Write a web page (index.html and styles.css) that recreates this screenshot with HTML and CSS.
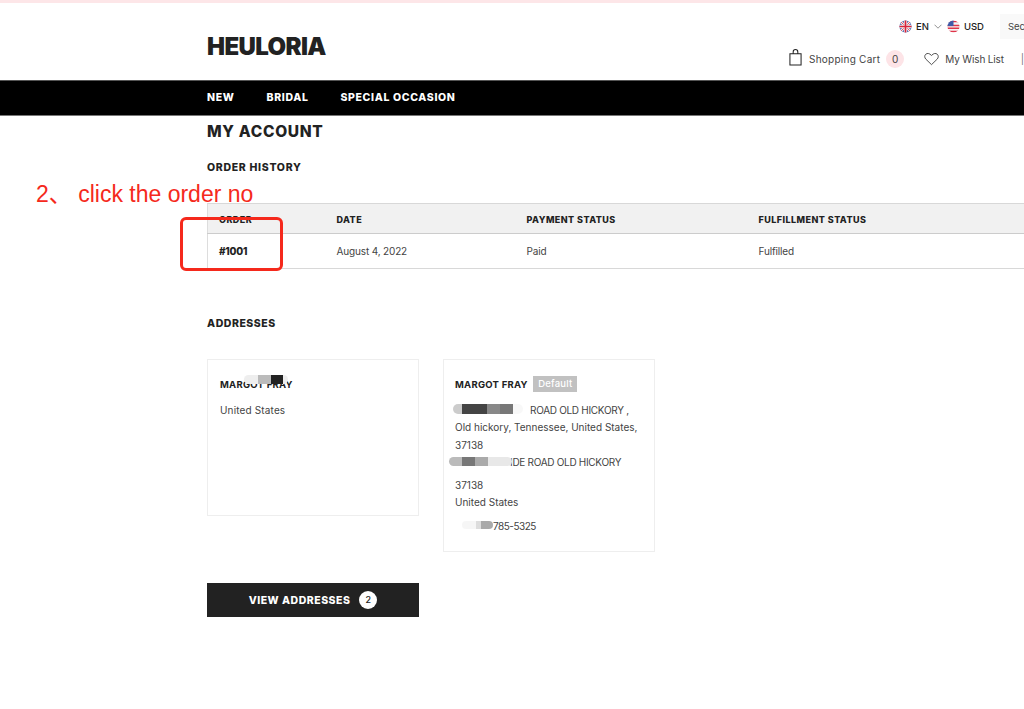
FILE: index.html
```html
<!DOCTYPE html>
<html lang="en">
<head>
<meta charset="utf-8">
<title>My Account</title>
<link rel="stylesheet" href="styles.css">
</head>
<body>
<div class="topstrip"></div>
<header class="header">
  <div class="logo">HEULORIA</div>
  <div class="tools">
    <div class="tools-top">
      <span class="pick">
        <svg class="flag" viewBox="0 0 14 14"><defs><clipPath id="c1"><circle cx="7" cy="7" r="6.5"/></clipPath></defs><g clip-path="url(#c1)"><rect width="14" height="14" fill="#3f5aa8"/><path d="M0 0L14 14M14 0L0 14" stroke="#eee" stroke-width="2.6"/><path d="M0 0L14 14M14 0L0 14" stroke="#d8324a" stroke-width=".9"/><path d="M7 0V14M0 7H14" stroke="#eee" stroke-width="3.6"/><path d="M7 0V14M0 7H14" stroke="#d8243c" stroke-width="1.8"/></g></svg>
        <span>EN</span>
        <svg class="chev" viewBox="0 0 8 5"><path d="M.5.7L4 4.2 7.5.7" fill="none" stroke="#777" stroke-width=".8"/></svg>
      </span>
      <span class="pick usd">
        <svg class="flag" viewBox="0 0 14 14"><defs><clipPath id="c2"><circle cx="7" cy="7" r="6.5"/></clipPath></defs><g clip-path="url(#c2)"><rect width="14" height="14" fill="#f4f4f4"/><path d="M0 1.5H14M0 6H14M0 9H14M0 12.5H14" stroke="#e0344a" stroke-width="1.6"/><rect width="7" height="6.5" fill="#3f5aa8"/></g></svg>
        <span>USD</span>
      </span>
      <span class="search">Sec</span>
    </div>
    <div class="tools-bottom">
      <span class="tool">
        <svg class="bag" viewBox="0 0 14 18"><path d="M1 5H13V17H1ZM4.5 5V3A2.5 2.5 0 0 1 9.5 3V5" fill="none" stroke="#222" stroke-width="1.1"/></svg>
        <span class="cart-label">Shopping Cart</span>
        <span class="count">0</span>
      </span>
      <span class="tool wish">
        <svg class="heart" viewBox="0 0 16 14"><path d="M8 13L2 7.2C.4 5.6.4 3.2 1.9 1.9 3.4.6 5.6.7 8 3.2 10.4.7 12.6.6 14.1 1.9 15.6 3.2 15.6 5.6 14 7.2Z" fill="none" stroke="#333" stroke-width=".9"/></svg>
        <span class="wish-label">My Wish List</span>
      </span>
      <span class="tool cut">|</span>
    </div>
  </div>
</header>
<nav class="nav">
  <a>NEW</a>
  <a>BRIDAL</a>
  <a>SPECIAL OCCASION</a>
</nav>
<main class="main">
  <h1 class="page-title">MY ACCOUNT</h1>
  <h2 class="section-title">ORDER HISTORY</h2>
  <table class="orders">
    <thead>
      <tr><th class="c1">ORDER</th><th class="c2">DATE</th><th class="c3">PAYMENT STATUS</th><th class="c4">FULFILLMENT STATUS</th></tr>
    </thead>
    <tbody>
      <tr><td class="order-no">#1001</td><td>August 4, 2022</td><td>Paid</td><td>Fulfilled</td></tr>
    </tbody>
  </table>
  <h2 class="section-title addresses-title">ADDRESSES</h2>
  <div class="cards">
    <div class="card card-a">
      <div class="name">MARGOT FRAY</div>
      <p class="line first">United States</p>
      <div class="smudge s1"></div>
    </div>
    <div class="card card-b">
      <div class="name">MARGOT FRAY <span class="default">Default</span></div>
      <p class="line first caps">ROAD OLD HICKORY ,</p>
      <p class="line">Old hickory, Tennessee, United States,</p>
      <p class="line">37138</p>
      <p class="line caps second-street">IDE ROAD OLD HICKORY</p>
      <p class="line gap">37138</p>
      <p class="line tight">United States</p>
      <p class="line phone">785-5325</p>
      <div class="smudge s2"></div>
      <div class="smudge s3"></div>
      <div class="smudge s4"></div>
    </div>
  </div>
  <a class="view-btn">VIEW ADDRESSES <span class="badge">2</span></a>
</main>
<div class="note">2、 click the order no</div>
<div class="note-box"></div>
</body>
</html>
```

FILE: styles.css
```css
* { box-sizing: border-box; }
html, body { margin: 0; padding: 0; height: 709px; overflow: hidden; background: #fff; }
body { font-family: "Inter", "Noto Sans", sans-serif; color: #222; width: 1024px; position: relative; }

.topstrip { height: 3px; background: #fde6e8; }

.header { height: 77px; padding-left: 207px; display: flex; justify-content: space-between; }
.logo { font-size: 24px; font-weight: 900; letter-spacing: -0.6px; color: #222; padding-top: 29px; line-height: 29px; }
.tools { width: 236px; flex: none; overflow: hidden; display: flex; flex-direction: column; align-items: flex-end; }
.tools-top { display: flex; align-items: center; height: 26px; margin-top: 10px; width: 125px; font-size: 9.5px; font-weight: 500; white-space: nowrap; }
.pick { display: flex; align-items: center; gap: 4px; }
.flag { width: 13px; height: 13px; }
.chev { width: 8px; height: 5px; margin-left: 1px; }
.usd { margin-left: 5px; }
.search { margin-left: 16px; background: #f9f9f9; height: 25px; line-height: 25px; padding-left: 8px; width: 40px; font-weight: 400; color: #444; font-size: 9.5px; }
.tools-bottom { display: flex; align-items: center; width: 236px; margin-top: 11px; font-size: 10px; color: #444; white-space: nowrap; }
.tool { display: flex; align-items: center; }
.bag { width: 13px; height: 17px; margin: -3px 7px 0 1px; }
.cart-label { letter-spacing: 0.25px; }
.wish-label { letter-spacing: -0.15px; }
.count { width: 18px; height: 18px; border-radius: 50%; background: #fde4e7; text-align: center; line-height: 18px; margin-left: 6px; }
.wish { margin-left: 20px; }
.heart { width: 15px; height: 14px; margin-right: 6px; }
.cut { margin-left: 17px; color: #777; }

.nav { height: 36px; padding-bottom: 1px; background: #000; border-top: 1px solid #555; border-bottom: 1px solid #777; display: flex; align-items: center; padding-left: 207px; color: #fff; font-size: 10.5px; font-weight: 800; letter-spacing: 0.65px; gap: 32px; }

.main { padding-left: 207px; }
.page-title { margin: 7px 0 0; font-size: 15.5px; line-height: 18px; font-weight: 800; letter-spacing: 0.7px; color: #222; }
.section-title { margin: 20px 0 0; font-size: 10.5px; line-height: 13px; font-weight: 800; letter-spacing: 0.7px; color: #222; }

.orders { margin-top: 29px; width: 830px; border-collapse: collapse; table-layout: fixed; font-size: 10px; color: #444; border-left: 1px solid #ddd; }
.orders th { background: #f1f1f1; height: 30px; font-size: 9px; font-weight: 800; text-align: left; letter-spacing: 0.45px; color: #222; padding: 2px 0 0 12px; border-top: 1px solid #d8d8d8; border-bottom: 1px solid #ccc; }
.orders td { height: 35px; padding: 0 0 0 12px; border-bottom: 1px solid #d8d8d8; letter-spacing: -0.15px; }
.orders .c1 { width: 117px; padding-left: 11px; }
.orders .c2 { width: 190px; }
.orders .c3 { width: 232px; }
.orders td.order-no { font-weight: 800; color: #222; padding-left: 11px; letter-spacing: -0.2px; }

.addresses-title { margin-top: 48px; letter-spacing: 0.55px; }
.cards { display: flex; align-items: flex-start; gap: 24px; margin-top: 29px; }
.card { position: relative; width: 212px; border: 1px solid #eee; font-size: 10px; color: #444; }
.card-a { height: 157px; padding: 18px 12px 0; }
.card-b { height: 193px; padding: 16px 11px 0; }
.name { font-size: 9.5px; font-weight: 700; letter-spacing: 0.25px; color: #222; line-height: 14px; white-space: nowrap; }
.default { display: inline-block; background: #c1c1c1; color: #fff; font-weight: 500; font-size: 9.5px; letter-spacing: 0.2px; height: 16px; line-height: 16px; padding: 0 5px; margin-left: 3px; vertical-align: 1px; }
.line { margin: 0; line-height: 17.4px; white-space: nowrap; }
.card-a .line { letter-spacing: 0.15px; }
.line.first { margin-top: 10px; }
.caps { letter-spacing: -0.3px; }
.card-b .line.first { padding-left: 75px; }
.card-b .second-street { padding-left: 55px; }
.line.gap { margin-top: 5px; }
.line.tight { margin-top: 0; }
.line.phone { margin-top: 7px; padding-left: 38px; letter-spacing: -0.5px; }

.smudge { position: absolute; height: 10px; border-radius: 5px; }
.s1 { left: 36px; top: 15px; width: 44px; height: 9px; background: linear-gradient(90deg, #eee 0 32%, #bbb 32% 61%, #222 61% 89%, #eee 89%); }
.s2 { left: 9px; top: 44px; width: 70px; background: linear-gradient(90deg, #ccc 0 13%, #444 13% 49%, #888 49% 67%, #777 67% 86%, #f8f8f8 86%); }
.s3 { left: 5px; top: 97px; width: 63px; height: 9px; background: linear-gradient(90deg, #bbb 0 21%, #777 21% 42%, #aaa 42% 62%, #e8e8e8 62%); }
.s4 { left: 18px; top: 161px; width: 31px; height: 8px; background: linear-gradient(90deg, #f6f6f6 0 45%, #ddd 45% 60%, #aaa 60% 100%); }

.view-btn { display: flex; align-items: center; justify-content: center; width: 212px; height: 34px; margin-top: 31px; background: #222; color: #fff; font-size: 10.5px; font-weight: 800; letter-spacing: 0.5px; gap: 9px; }
.badge { width: 18px; height: 18px; border-radius: 50%; background: #fff; color: #222; font-size: 9px; font-weight: 500; text-align: center; line-height: 18px; letter-spacing: 0; }

.note { position: absolute; left: 36px; top: 180px; font-family: "Liberation Sans", "Noto Sans CJK SC", sans-serif; font-size: 23px; line-height: 28px; color: #f5291c; white-space: nowrap; }
.note-box { position: absolute; left: 180px; top: 217px; width: 103px; height: 54px; border: 3px solid #f5291c; border-radius: 6px; }
```
